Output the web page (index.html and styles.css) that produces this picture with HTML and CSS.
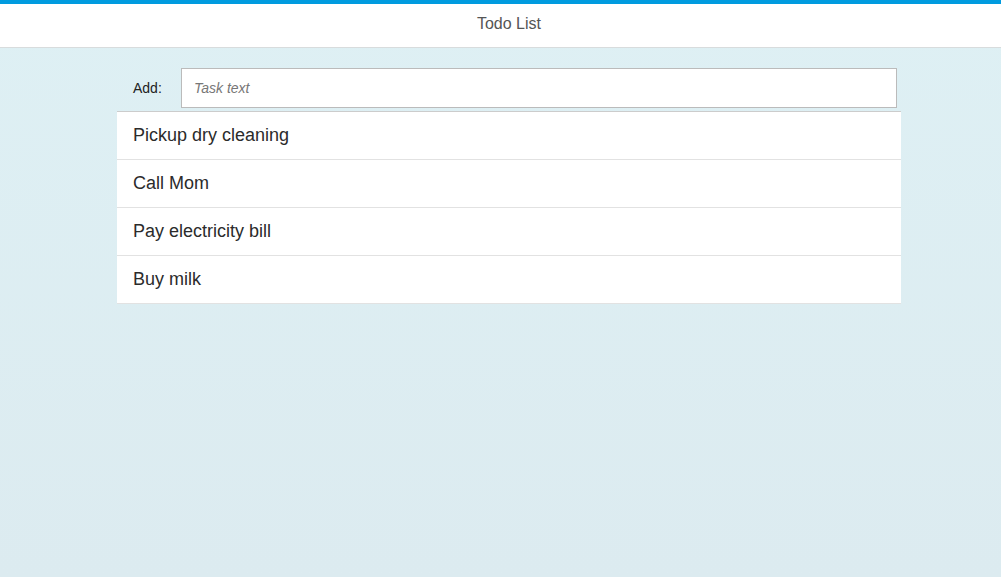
FILE: index.html
```html
<!DOCTYPE html>
<html>
<head>
<meta charset="utf-8">
<link rel="stylesheet" href="styles.css">
</head>
<body>
<header class="header">Todo List</header>
<div class="page">
  <main class="main">
    <div class="add-row">
      <label class="add-label">Add:</label>
      <input class="add-input" type="text" placeholder="Task text">
    </div>
    <ul class="list">
      <li class="item">Pickup dry cleaning</li>
      <li class="item">Call Mom</li>
      <li class="item">Pay electricity bill</li>
      <li class="item">Buy milk</li>
    </ul>
  </main>
</div>
</body>
</html>
```
FILE: styles.css
```css
html, body {
  margin: 0;
  padding: 0;
  height: 100%;
}
body {
  font-family: "Liberation Sans", Arial, sans-serif;
  background: linear-gradient(to bottom, #def0f4 0%, #dcebf0 100%);
  color: #333;
}
.header {
  border-top: 4px solid #009bdf;
  background: #fff;
  line-height: 40px;
  text-align: center;
  font-size: 16px;
  color: #555;
  border-bottom: 1px solid #d8dcdd;
  box-sizing: border-box;
  height: 48px;
  padding-left: 17px;
}
.page {
  display: flex;
  justify-content: center;
  padding-left: 17px;
}
.main {
  width: 784px;
  padding-top: 20px;
}
.add-row {
  display: flex;
  align-items: center;
  padding: 0 4px 0 16px;
  height: 40px;
  margin-bottom: 3px;
}
.add-label {
  font-size: 14px;
  color: #222;
  width: 48px;
}
.add-input {
  flex: 1;
  height: 40px;
  box-sizing: border-box;
  border: 1px solid #bbb;
  padding: 0 12px;
  font-family: "Liberation Sans", Arial, sans-serif;
  font-size: 14px;
  outline: none;
  background: #fff;
}
.add-input::placeholder {
  font-style: italic;
  color: #777;
}
.list {
  list-style: none;
  margin: 0;
  padding: 0;
  background: #fff;
  border-top: 1px solid #ccc;
}
.item {
  height: 48px;
  box-sizing: border-box;
  line-height: 46px;
  padding: 0 16px;
  font-size: 18px;
  color: #2b2b2b;
  border-bottom: 1px solid #e2e2e2;
}
```
